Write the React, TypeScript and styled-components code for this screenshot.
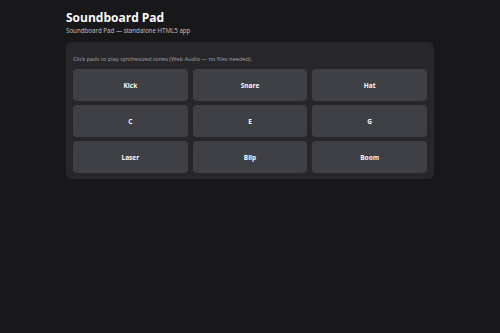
import React from "react";
import styled, { createGlobalStyle } from "styled-components";

const GlobalStyle = createGlobalStyle`
    html, body {
        margin: 0;
        padding: 0;
        background: #18181b;
        color: #e4e4e7;
        font-family: "Open Sans", "Noto Sans", "Liberation Sans", sans-serif;
    }
`;

const Container = styled.div`
    max-width: 368px;
    margin: 0 auto;
    padding-top: 10px;
`;

const Title = styled.h1`
    margin: 0;
    font-size: 12px;
    line-height: 16px;
    font-weight: 700;
    color: #fafafa;
`;

const Subtitle = styled.p`
    margin: 0 0 7px;
    font-size: 6.2px;
    line-height: 9px;
    color: #c4c4cc;
`;

const Panel = styled.section`
    background: #27272a;
    border-radius: 6px;
    padding: 12px 7px 6px;
`;

const Hint = styled.p`
    margin: 0 0 5px;
    font-size: 5.7px;
    line-height: 10px;
    color: #a1a1aa;
`;

const Grid = styled.div`
    display: grid;
    grid-template-columns: repeat(3, 1fr);
    gap: 4px 5px;
`;

const Pad = styled.button`
    height: 32px;
    border: none;
    border-radius: 4px;
    background: #3f3f46;
    color: #fafafa;
    font-family: inherit;
    font-size: 6.5px;
    font-weight: 700;
    cursor: pointer;
    &:hover {
        background: #4a4a52;
    }
`;

const pads = ["Kick", "Snare", "Hat", "C", "E", "G", "Laser", "Blip", "Boom"];

function App() {
    return (
        <>
            <GlobalStyle />
            <Container>
                <Title>Soundboard Pad</Title>
                <Subtitle>Soundboard Pad — standalone HTML5 app</Subtitle>
                <Panel>
                    <Hint>Click pads to play synthesized tones (Web Audio — no files needed).</Hint>
                    <Grid>
                        {pads.map(p => (
                            <Pad key={p}>{p}</Pad>
                        ))}
                    </Grid>
                </Panel>
            </Container>
        </>
    );
}
export default App;
